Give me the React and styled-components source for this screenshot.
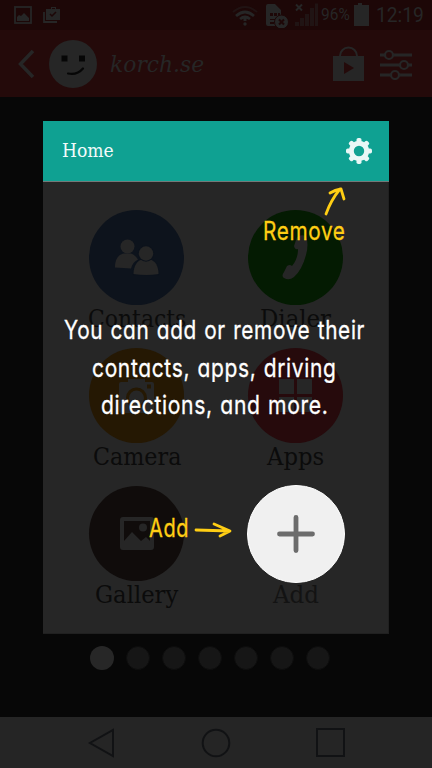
import React, { useLayoutEffect, useRef, useState } from 'react';
import styled, { createGlobalStyle } from 'styled-components';

const dim = '#262626';

const Global = createGlobalStyle`
  *, *::before, *::after { box-sizing: border-box; }
  html, body { margin: 0; background: #070707; }
  svg { display: block; flex: none; }
`;

const Screen = styled.div`
  position: relative;
  display: flex;
  flex-direction: column;
  width: 432px;
  height: 768px;
  overflow: hidden;
  background: #070707;
  font-family: "DejaVu Serif", "Liberation Serif", serif;
`;

const FitBox = styled.span`
  display: block;
  flex: none;
  width: ${(p) => p.$width}px;
  white-space: nowrap;
`;

const FitInner = styled.span`
  display: inline-block;
  transform-origin: 0 50%;
`;

/* Condenses or widens a line so that it fills exactly the given width. */
function Fit({ width, children }) {
  const ref = useRef(null);
  const [scale, setScale] = useState(1);
  useLayoutEffect(() => {
    setScale(width / ref.current.offsetWidth);
  }, [width]);
  return (
    <FitBox $width={width}>
      <FitInner ref={ref} style={{ transform: `scaleX(${scale})` }}>{children}</FitInner>
    </FitBox>
  );
}

const StatusBar = styled.header`
  display: flex;
  align-items: center;
  height: 30px;
  padding: 0 8px 0 14px;
  background: #1d0707;
  color: ${dim};
  font-family: Roboto, sans-serif;
`;

const StatusIcons = styled.div`
  display: flex;
  align-items: center;
  gap: 11px;
  margin-right: auto;
`;

const Percent = styled.div`
  margin-left: 3px;
  font-size: 16px;
  line-height: 32px;
`;

const Clock = styled.div`
  margin-left: 6px;
  font-size: 20px;
  line-height: 33px;
`;

const AppBar = styled.header`
  display: flex;
  align-items: center;
  height: 67px;
  padding: 0 19px 0 18px;
  background: #240a0a;
  color: ${dim};
`;

const Face = styled.div`
  margin: 0 13px 0 14px;
`;

const AppTitle = styled.h1`
  margin: 0 auto 0 0;
  font-size: 23px;
  line-height: 30px;
  font-style: italic;
  font-weight: 400;
`;

const Actions = styled.div`
  display: flex;
  align-items: center;
  gap: 16px;
`;

const Desktop = styled.main`
  display: flex;
  flex-direction: column;
  flex: 1;
  padding: 24px 43px 0;
`;

const Card = styled.section`
  width: 346px;
  height: 513px;
  border: solid #202020;
  border-width: 0 1px 1px 0;
  background: ${dim};
`;

const CardHeader = styled.div`
  display: flex;
  align-items: center;
  justify-content: space-between;
  width: 346px;
  height: 61px;
  padding: 0 17px 0 19px;
  border-bottom: 1px solid #737978;
  background: #0fa192;
  color: #f2fbfa;
  font-size: 18.5px;
  line-height: 26px;
`;

const Grid = styled.div`
  display: grid;
  grid-template-columns: 159px 159px;
  grid-auto-rows: 138px;
  padding: 28px 0 0 14px;
`;

const Tile = styled.div`
  display: flex;
  flex-direction: column;
  align-items: center;
`;

const Disc = styled.div`
  display: grid;
  place-items: center;
  width: 95px;
  height: 95px;
  border-radius: 50%;
  background: ${(p) => p.$color};
`;

const AddDisc = styled(Disc)`
  flex: none;
  width: 98px;
  height: 98px;
  margin: -1px 0 -2px;
  border: 1.5px solid #fff;
`;

const Label = styled.div`
  margin-top: -1px;
  color: ${(p) => p.$color || '#0b0b0b'};
  font-size: 23.5px;
  line-height: 30px;
`;

const Pager = styled.div`
  display: flex;
  gap: 12px;
  padding: 12px 0 0 47px;
`;

const Dot = styled.span`
  width: 24px;
  height: 24px;
  border: ${(p) => (p.$active ? '0' : '0.5px solid #0d0d0d')};
  border-radius: 50%;
  background: ${(p) => (p.$active ? '#272727' : '#161616')};
`;

const NavBar = styled.nav`
  display: flex;
  justify-content: space-between;
  align-items: center;
  height: 51px;
  padding: 1px 86px 0 87px;
  background: #252525;
`;

const Hint = styled.div`
  position: absolute;
  left: ${(p) => p.$x}px;
  top: ${(p) => p.$y}px;
  display: flex;
  flex-direction: column;
  align-items: center;
  color: ${(p) => p.$color || '#ffce14'};
  font-family: Inter, sans-serif;
  font-size: 25.5px;
  font-weight: 400;
  font-feature-settings: "cv11";
  letter-spacing: 0.8px;
  word-spacing: 1px;
  -webkit-text-stroke: 0.3px currentColor;
  line-height: 37.5px;
`;

const Pointer = styled.svg`
  position: absolute;
  left: ${(p) => p.$x}px;
  top: ${(p) => p.$y}px;
`;

function Contacts() {
  return (
    <svg width="95" height="95" fill={dim}>
      <circle cx="38.500" cy="36.500" r="7" />
      <path d="M26 57.500c0-8 3-13 9-14h7c3 1 5 3 7 6-4 2-6 5-7 9Z" />
      <g stroke="#0d131c" strokeWidth="2" paintOrder="stroke">
        <path d="M44.500 64c0-8 4-14 9-14.500h7c6 1 9 7 9 14.500q-12 2-25 0Z" />
        <circle cx="57" cy="43.500" r="7.200" />
      </g>
    </svg>
  );
}

function Phone() {
  return (
    <svg width="95" height="95" fill={dim}>
      <path d="M49 27q4-3 9-1 3 8 0 19-4 15-12 22-5 4-10 1-3-2 0-6l3-6q3-2 5 0 6-7 6-17-3 1-4-3Z" />
    </svg>
  );
}

function Camera() {
  return (
    <svg width="95" height="95">
      <path d="M32 34h7v-3h17v3h7a2 2 0 0 1 2 2v26a3 3 0 0 1-3 3H33a3 3 0 0 1-3-3V36a2 2 0 0 1 2-2Z" fill={dim} />
      <circle cx="47.500" cy="50" r="9" fill="none" stroke="#251803" strokeWidth="3" />
      <rect x="58" y="36.500" width="4" height="4" fill="#251803" />
    </svg>
  );
}

function Windows() {
  return (
    <svg width="95" height="95" fill={dim}>
      <path d="M31 31h15v15H31ZM49 31h15v15H49ZM31 49h15v15H31ZM49 49h15v15H49Z" />
    </svg>
  );
}

function Picture() {
  return (
    <svg width="95" height="95">
      <rect x="31" y="31" width="34" height="33" rx="3" fill={dim} />
      <path d="M35 35h26v20l-4-4-5 4-9-9-8 9Z" fill="#100c0b" />
      <circle cx="54" cy="41.500" r="4" fill={dim} />
    </svg>
  );
}

const tiles = [
  { name: 'Contacts', width: 98, color: '#0d131c', Icon: Contacts },
  { name: 'Dialer', width: 71, color: '#041b02', Icon: Phone },
  { name: 'Camera', width: 88, color: '#251803', Icon: Camera },
  { name: 'Apps', width: 57, color: '#260a0c', Icon: Windows },
  { name: 'Gallery', width: 83, color: '#100c0b', Icon: Picture },
];

const teeth = [0, 45, 90, 135, 180, 225, 270, 315];

export default function App() {
  return (
    <>
      <Global />
      <Screen>
        <StatusBar>
          <StatusIcons>
            <svg width="18" height="18">
              <rect x="1" y="1" width="16" height="16" fill="none" stroke={dim} strokeWidth="1.800" />
              <path d="M3 15v-4l2-2 2 1 3-3 2 2 3 3v3Z" fill={dim} />
            </svg>
            <svg width="18" height="18">
              <path d="M1 6v10h13" fill="none" stroke={dim} strokeWidth="1.800" />
              <path d="M3 3h5V1h5v2h4v11H3ZM9 3h3V2H9Z" fill={dim} fillRule="evenodd" />
              <path d="m7 8 2 2 4-4" fill="none" stroke="#1d0707" strokeWidth="1.500" />
            </svg>
          </StatusIcons>
          <svg width="26" height="22" fill="none" stroke={dim}>
            <path d="M1 8Q13-2 25 8" strokeWidth="2" opacity=".4" />
            <path d="M4 12q9-8 18 0" strokeWidth="2.800" />
            <path d="M8 15q5-4 10 0" strokeWidth="2.800" />
            <path d="M13 13v4" strokeWidth="3" />
            <circle cx="13" cy="20" r="1.700" fill={dim} stroke="none" />
          </svg>
          <svg width="33" height="26">
            <path d="M8 2h9l6 6v16H10a2 2 0 0 1-2-2V4a2 2 0 0 1 2-2Z" fill={dim} />
            <path d="M12 11h3v3h-3ZM16 11h3v3h-3ZM20 11h2v3h-2ZM12 17h5v1h-5ZM12 20h4v2h-4Z" fill="#1d0707" />
            <circle cx="23.500" cy="20" r="7" fill={dim} stroke="#1d0707" />
            <path d="m21 17.500 5 5m0-5-5 5" stroke="#1d0707" strokeWidth="2" />
          </svg>
          <svg width="27" height="24" fill={dim}>
            <path d="m5 1.500 6 6m0-6-6 6" stroke={dim} strokeWidth="2" />
            <path d="M4 19h4v4H4ZM9 15h4v8H9ZM14 11h4v12h-4ZM19 5h4v18h-4ZM24 .500h3.500V23H24Z" opacity=".42" />
          </svg>
          <Percent><Fit width={29}>96%</Fit></Percent>
          <svg width="20" height="24"><path d="M8 0h4v2h7v21H4V2h4Z" fill={dim} /></svg>
          <Clock><Fit width={48}>12:19</Fit></Clock>
        </StatusBar>
        <AppBar>
          <svg width="17" height="30"><path d="M15 2 2.500 15 15 28" fill="none" stroke={dim} strokeWidth="3.500" /></svg>
          <Face>
            <svg width="48" height="48">
              <circle cx="24" cy="24" r="24" fill={dim} />
              <path d="M12.500 15.500h6v6h-6ZM30 15.500h6v6h-6Z" fill="#060606" />
              <path d="M19 33.500q9 2 15-5" fill="none" stroke="#060606" strokeWidth="2.200" strokeLinecap="round" />
            </svg>
          </Face>
          <AppTitle><Fit width={94}>korch.se</Fit></AppTitle>
          <Actions>
            <svg width="32" height="35">
              <path d="M8 10a8 8 0 0 1 17 0" fill="none" stroke={dim} strokeWidth="2" />
              <path d="M1 10h31v25H1Z" fill={dim} />
              <path d="m12 16 10 6-10 6Z" fill="#240a0a" />
            </svg>
            <svg width="33" height="32" stroke={dim} fill="#240a0a">
              <path d="M0 7h32M0 17h32M0 27h32" strokeWidth="3" />
              <g strokeWidth="2.200"><circle cx="9" cy="7" r="4" /><circle cx="24" cy="17" r="4" /><circle cx="15" cy="27" r="4" /></g>
            </svg>
          </Actions>
        </AppBar>
        <Desktop>
          <Card>
            <CardHeader>
              <Fit width={52}>Home</Fit>
              <svg width="26" height="26" viewBox="-13 -13 26 26" fill="#e9f7f6">
                <circle r="7.700" fill="none" stroke="#e9f7f6" strokeWidth="5" />
                {teeth.map((a) => <rect key={a} x="-2.500" y="-13" width="5" height="6" rx="1.800" transform={`rotate(${a})`} />)}
              </svg>
            </CardHeader>
            <Grid>
              {tiles.map(({ name, width, color, Icon }) => (
                <Tile key={name}>
                  <Disc $color={color}><Icon /></Disc>
                  <Label><Fit width={width}>{name}</Fit></Label>
                </Tile>
              ))}
              <Tile>
                <AddDisc $color="#f0f0f0">
                  <svg width="38" height="38"><path d="M19 2.500v33M2.500 19h33" stroke="#6c6c6c" strokeWidth="4.800" strokeLinecap="round" /></svg>
                </AddDisc>
                <Label $color="#131313"><Fit width={46}>Add</Fit></Label>
              </Tile>
            </Grid>
          </Card>
          <Pager>
            {[0, 1, 2, 3, 4, 5, 6].map((n) => <Dot key={n} $active={n === 0} />)}
          </Pager>
        </Desktop>
        <NavBar>
          <svg width="28" height="30"><path d="M26 2v26L3 15Z" fill="none" stroke="#111214" strokeWidth="2" /></svg>
          <svg width="30" height="30"><circle cx="15" cy="15" r="13.300" fill="none" stroke="#111214" strokeWidth="2" /></svg>
          <svg width="30" height="30"><rect x="1" y="1" width="27" height="27" fill="none" stroke="#111214" strokeWidth="2" /></svg>
        </NavBar>
        <Hint $x={263} $y={212}><Fit width={83}>Remove</Fit></Hint>
        <Pointer $x={322} $y={186} width="26" height="32" fill="none" stroke="#ffce14" strokeWidth="2.800" strokeLinecap="round" strokeLinejoin="round">
          <path d="M4 28Q9 14 18 3M8 7q5-3 11-4l3 10" />
        </Pointer>
        <Hint $x={64} $y={311} $color="#fff">
          <Fit width={301}>You can add or remove their</Fit>
          <Fit width={245}>contacts, apps, driving</Fit>
          <Fit width={228}>directions, and more.</Fit>
        </Hint>
        <Hint $x={149} $y={509}><Fit width={40}>Add</Fit></Hint>
        <Pointer $x={193} $y={521} width="40" height="18" fill="none" stroke="#ffce14" strokeWidth="2.800" strokeLinecap="round" strokeLinejoin="round">
          <path d="M3 9l34 1M21 3l16 7-10 5" />
        </Pointer>
      </Screen>
    </>
  );
}
